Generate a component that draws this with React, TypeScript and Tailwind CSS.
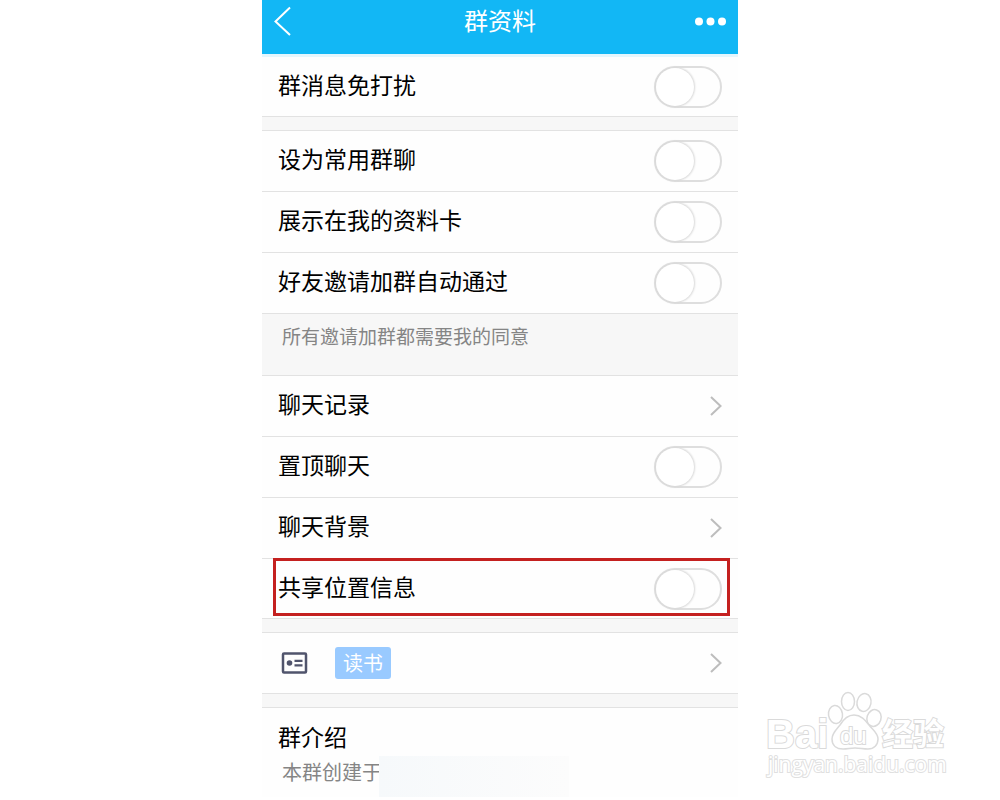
import { useId, type ReactNode } from "react";

function Chevron() {
  return (
    <svg width="12" height="20" viewBox="0 0 12 20" fill="none" stroke="#bdbdbd" strokeWidth="2" aria-hidden="true">
      <path d="M1 1l9.500 9L1 19" />
    </svg>
  );
}

function SwitchRow({ label, highlighted = false, last = false }: { label: string; highlighted?: boolean; last?: boolean }) {
  const id = useId();
  return (
    <div className={`relative flex items-center justify-between px-4 ${last ? "h-[59px]" : "h-[61px] border-b border-[#e2e2e2]"}`}>
      <label htmlFor={id} className="pb-[6px] text-[23px] leading-8">
        {label}
      </label>
      <input
        id={id}
        type="checkbox"
        role="switch"
        className="flex h-[42px] w-[68px] appearance-none rounded-full border-2 border-[#dedede] bg-[#fefefe] before:h-[38px] before:w-[38px] before:rounded-full before:bg-white before:shadow-[0_0_2px_1px_#d8d8d8] checked:justify-end checked:bg-[#12b7f5]"
      />
      {highlighted && <div className="pointer-events-none absolute -top-px right-2 bottom-[2px] left-[11px] border-3 border-[#c4201f]" />}
    </div>
  );
}

function LinkRow({ label, children }: { label: string; children: ReactNode }) {
  return (
    <a href="#" aria-label={label} className="flex h-[61px] items-center justify-between border-b border-[#e2e2e2] px-4 text-[23px] leading-8">
      <span className="pb-[6px]">{children}</span>
      <Chevron />
    </a>
  );
}

function Gap() {
  return <div className="h-[15px] border-y border-[#e2e2e2] bg-[#f7f7f7]" />;
}

function Watermark() {
  return (
    <svg
      className="absolute right-[48px] bottom-[14px]"
      width="190"
      height="98"
      viewBox="0 0 190 98"
      fill="#ffffff"
      stroke="#dadada"
      strokeWidth="2"
      aria-hidden="true"
    >
      <g strokeWidth="1.500">
        <ellipse cx="73.500" cy="26.500" rx="7" ry="9" transform="rotate(-8 73.500 26.500)" />
        <ellipse cx="86" cy="13.500" rx="6.500" ry="9" />
        <ellipse cx="102" cy="14.500" rx="7" ry="9" transform="rotate(12 102 14.500)" />
        <ellipse cx="112" cy="30" rx="7" ry="8.500" transform="rotate(18 112 30)" />
        <path d="M92 27c-7 0-11 5-14 10-4 5-8 8-8 14 0 7 5 10 11 10 5 0 7-1 12-1s8 1 13 1c6 0 10-4 10-10 0-6-5-9-9-14-4-5-8-10-15-10z" />
      </g>
      <g style={{ paintOrder: "stroke" }}>
        <text x="4" y="60" fontSize="40" fontWeight="700" fontFamily="Liberation Sans, sans-serif">Bai</text>
        <text x="78" y="56" fontSize="24" fontFamily="Liberation Sans, sans-serif">du</text>
        <text x="120" y="57" fontSize="31" fontWeight="700" fontFamily="Noto Sans CJK SC, sans-serif">经验</text>
        <text x="6" y="84" fontSize="21" stroke="#e0e0e0" fontFamily="Open Sans, sans-serif">jingyan.baidu.com</text>
      </g>
    </svg>
  );
}

export default function App() {
  return (
    <div className="relative min-h-screen overflow-hidden bg-white font-['Noto_Sans_CJK_SC',sans-serif] text-black">
      <main className="mx-auto max-w-[476px] bg-[#fefefe]">
        <header className="grid h-[57px] grid-cols-3 items-start border-b-3 border-[#e4f6fd] bg-[#12b7f5] bg-clip-padding px-3 text-white">
          <button type="button" aria-label="返回" className="justify-self-start pt-[6px]">
            <svg width="18" height="30" viewBox="0 0 18 30" fill="none" stroke="currentColor" strokeWidth="2">
              <path d="M16 1.500L1.500 15.500L16 29" />
            </svg>
          </button>
          <h1 className="justify-self-center pt-1 text-2xl leading-8">群资料</h1>
          <button type="button" aria-label="更多" className="justify-self-end pt-[17px]">
            <svg width="31" height="9" viewBox="0 0 31 9" fill="currentColor">
              <circle cx="4" cy="4.500" r="4" />
              <circle cx="15.500" cy="4.500" r="4" />
              <circle cx="27" cy="4.500" r="4" />
            </svg>
          </button>
        </header>

        <SwitchRow label="群消息免打扰" last />
        <Gap />
        <SwitchRow label="设为常用群聊" />
        <SwitchRow label="展示在我的资料卡" />
        <SwitchRow label="好友邀请加群自动通过" />
        <p className="h-[62px] border-b border-[#e2e2e2] bg-[#f7f7f7] px-5 pt-[6px] text-[19px] leading-8 text-[#858585]">
          所有邀请加群都需要我的同意
        </p>
        <LinkRow label="聊天记录">聊天记录</LinkRow>
        <SwitchRow label="置顶聊天" />
        <LinkRow label="聊天背景">聊天背景</LinkRow>
        <SwitchRow label="共享位置信息" highlighted last />
        <Gap />
        <a href="#" className="flex h-[60px] items-center px-4">
          <svg width="34" height="24" viewBox="0 0 34 24" fill="none" stroke="#50546c" strokeWidth="2.500" aria-hidden="true">
            <rect x="5" y="2.500" width="23" height="19" rx="1" />
            <circle cx="11.500" cy="12" r="2.800" fill="#50546c" stroke="none" />
            <path d="M16.500 9.800h8M16.500 14.300h8" strokeWidth="2.200" />
          </svg>
          <span className="ml-[23px] rounded-[3px] bg-[#99caff] px-2 text-xl leading-8 text-white">读书</span>
          <span className="ml-auto">
            <Chevron />
          </span>
        </a>
        <Gap />
        <section className="px-4 pt-3">
          <h2 className="text-[23px] leading-8">群介绍</h2>
          <div className="flex items-start pl-1 text-xl leading-8 text-[#858585]">
            <p className="pt-1 whitespace-nowrap">本群创建于</p>
            <div className="relative mt-1 -ml-[3px] h-[41px] w-[190px] bg-gradient-to-r from-[#f6f9fb] to-[#fcfcfc]" />
          </div>
        </section>
      </main>
      <Watermark />
    </div>
  );
}
